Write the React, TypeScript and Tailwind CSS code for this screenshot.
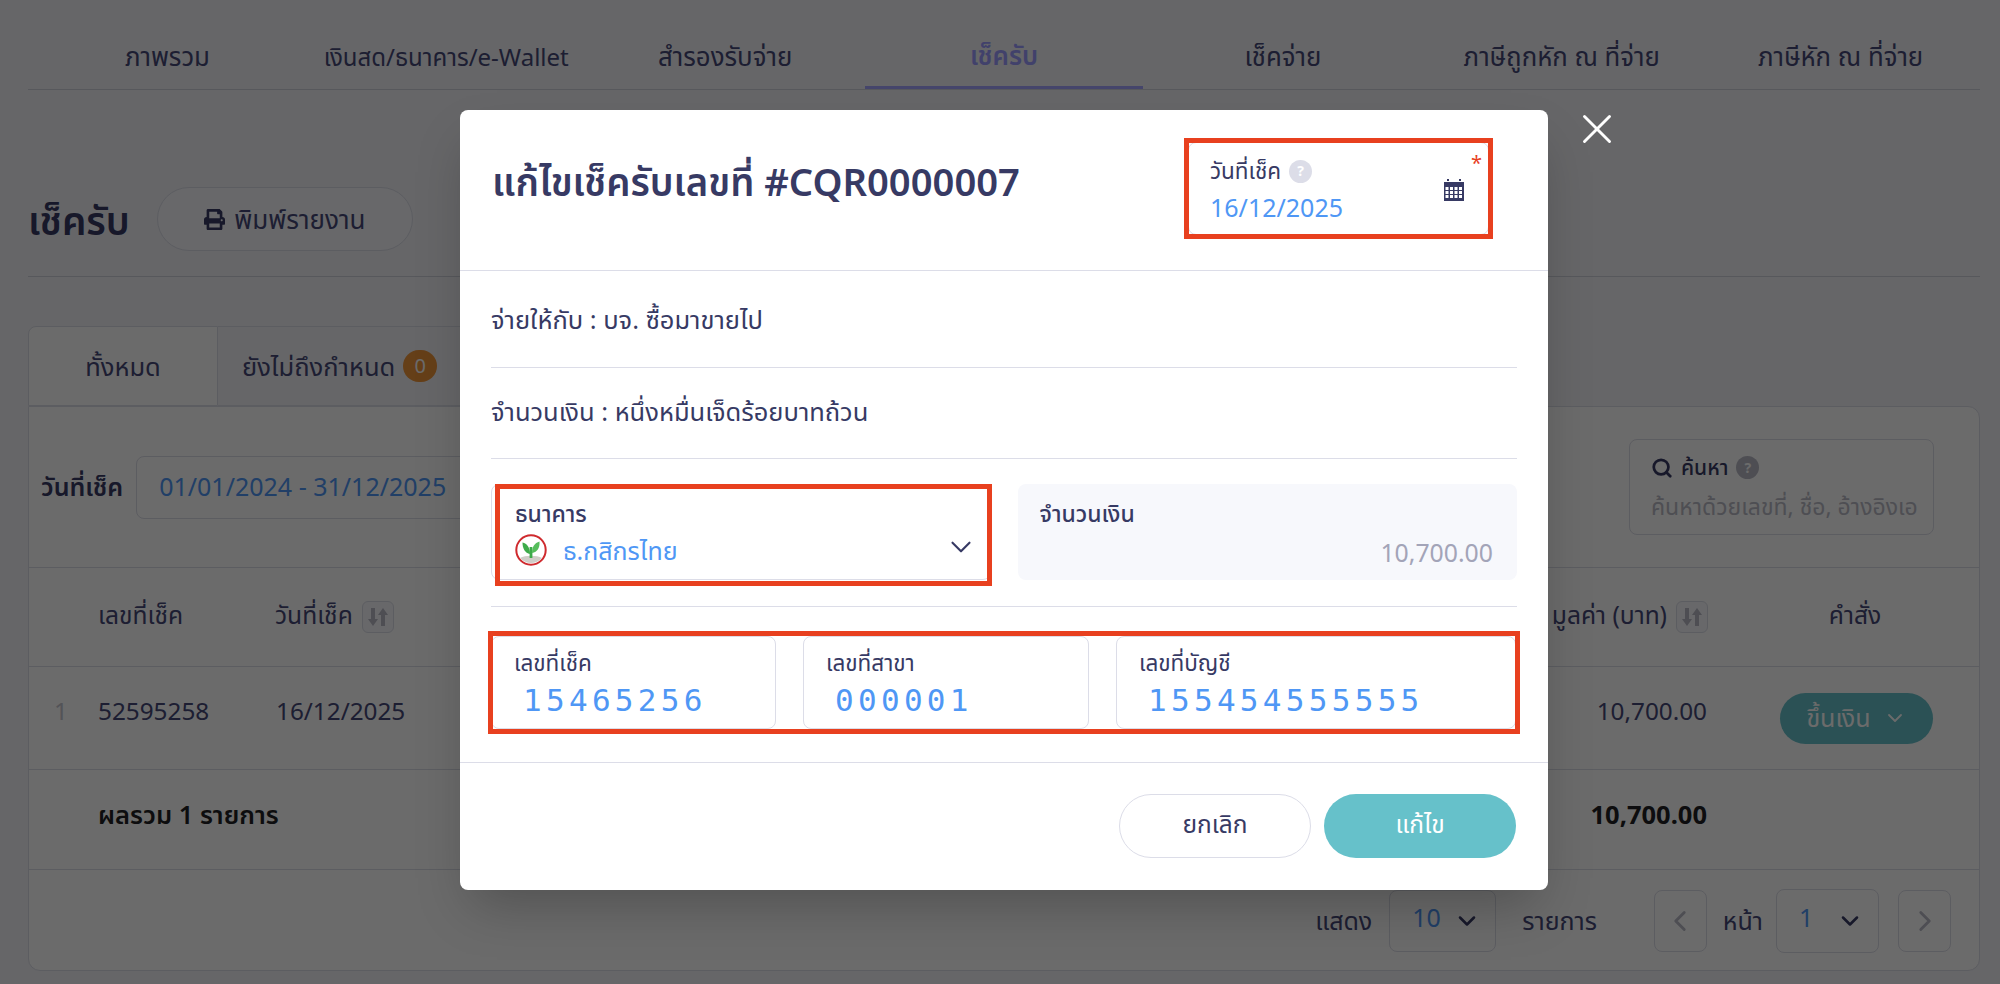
import { ChevronDown, ChevronLeft, ChevronRight, Search, X } from 'lucide-react'
import { FaPrint } from 'react-icons/fa'

const TABS = ['ภาพรวม', 'เงินสด/ธนาคาร/e-Wallet', 'สำรองรับจ่าย', 'เช็ครับ', 'เช็คจ่าย', 'ภาษีถูกหัก ณ ที่จ่าย', 'ภาษีหัก ณ ที่จ่าย']

function SortIcon() {
  return (
    <span className="flex h-[32px] w-[32px] items-center justify-center rounded-md border border-[#dcdde8] bg-[#f7f8fc]">
      <svg width="22" height="20" viewBox="0 0 22 20" fill="#b9bac6">
        <path d="M4 1h4v11h3l-5 7-5-7h3z" />
        <path d="M14 19h4V8h3l-5-7-5 7h3z" />
      </svg>
    </span>
  )
}

function HelpDot({ className }: { className: string }) {
  return (
    <span className={`flex h-[23px] w-[23px] items-center justify-center rounded-full text-[14px] font-bold text-white ${className}`}>?</span>
  )
}

function CalendarIcon() {
  return (
    <svg width="20" height="22" viewBox="0 0 20 22" fill="none">
      <rect x="0" y="3" width="20" height="19" fill="#373a64" />
      <rect x="3" y="0" width="2" height="2" fill="#373a64" />
      <rect x="15" y="0" width="2" height="2" fill="#373a64" />
      <g fill="#fff">
        {[8, 12, 16].map((y) =>
          [1.5, 6, 10.5, 15].map((x) => <rect key={`${x}-${y}`} x={x} y={y} width="3" height="3" />),
        )}
      </g>
    </svg>
  )
}

function KBankLogo() {
  return (
    <svg width="32" height="32" viewBox="0 0 32 32">
      <circle cx="16" cy="16" r="14.7" fill="#fff" stroke="#cf2a2e" strokeWidth="2" />
      <path d="M5 24c5-3 17-3 22 0-3 3.500-7 5-11 5s-8-1.500-11-5z" fill="#cfcdc8" />
      <path d="M14.600 13h2.800v11h-2.800z" fill="#3dab4a" />
      <path d="M15 20C10 19 7.500 14.500 7.500 8.500 12 9.500 15 13.500 15 20z" fill="#3dab4a" />
      <path d="M17 19c0-6 2.500-10 7.500-11.500.5 6-2 10.500-7.500 11.500z" fill="#56bd5c" />
    </svg>
  )
}

function CheckField({ label, value }: { label: string; value: string }) {
  return (
    <div className="h-[93px] rounded-lg border border-[#dcdde8] px-[22px] pt-[11px]">
      <div className="text-[22.500px] leading-[30px] text-[#373a64]">{label}</div>
      <div className="mt-[3px] pl-[9px] font-['DejaVu_Sans_Mono',monospace] text-[31px] leading-[38px] tracking-[4.300px] text-[#4f97f5]">{value}</div>
    </div>
  )
}

function PageBehind() {
  return (
    <div className="min-h-[984px] bg-[#f2f3f7] pl-[28px] pr-[20px] text-[#454878]">
      <div className="grid h-[90px] grid-cols-7 border-b border-[#d0d1dc]">
        {TABS.map((t) => (
          <div
            key={t}
            className={`flex items-center justify-center pt-[24px] ${t === 'เงินสด/ธนาคาร/e-Wallet' ? 'text-[24px]' : 'text-[25.800px]'} ${t === 'เช็ครับ' ? 'border-b-[3px] border-[#a4a4ff] font-semibold text-[#9c9cff]' : ''}`}
          >
            {t}
          </div>
        ))}
      </div>

      <div className="flex h-[187px] items-start border-b border-[#d0d1dc] pt-[97px]">
        <h1 className="mt-[10px] text-[38.500px] font-semibold leading-[46px] text-[#373a64]">เช็ครับ</h1>
        <button className="ml-[27px] flex h-[64px] w-[256px] items-center justify-center gap-[9px] rounded-full border border-[#dcdde8] bg-[#f7f8fc] text-[26px]">
          <FaPrint size={21} className="text-[#373a64]" />
          พิมพ์รายงาน
        </button>
      </div>

      <div className="mt-[49px] flex h-[80px]">
        <div className="flex w-[190px] items-center justify-center rounded-tl-lg border border-[#dcdde8] bg-white text-[25.500px]">ทั้งหมด</div>
        <div className="flex w-[300px] items-center gap-[8px] border-y border-r border-[#dcdde8] pl-[24px] text-[25.500px]">
          ยังไม่ถึงกำหนด
          <span className="flex h-[32px] w-[34px] items-center justify-center rounded-full bg-[#f0963a] text-[20px] text-white">0</span>
        </div>
      </div>

      <div className="h-[565px] rounded-b-xl rounded-tr-xl border border-[#dcdde8] bg-white">
        <div className="flex h-[160px] items-center justify-between pl-[12px] pr-[45px]">
          <div className="flex items-center">
            <span className="text-[25px] font-semibold text-[#373a64]">วันที่เช็ค</span>
            <div className="ml-[13px] flex h-[63px] w-[420px] items-center rounded-lg border border-[#dcdde8] pl-[22px] text-[25px] text-[#4f97f5]">
              01/01/2024 - 31/12/2025
            </div>
          </div>
          <div className="h-[96px] w-[305px] rounded-lg border border-[#dcdde8] pl-[21px] pt-[12px]">
            <div className="flex items-center gap-[8px] text-[21px] font-medium text-[#373a64]">
              <Search size={22} strokeWidth={3} />
              ค้นหา
              <HelpDot className="bg-[#b9bac6]" />
            </div>
            <div className="mt-[5px] whitespace-nowrap text-[23px] text-[#b9bac6]">ค้นหาด้วยเลขที่, ชื่อ, อ้างอิงเอ</div>
          </div>
        </div>

        <div className="flex h-[99px] items-center border-t border-[#dcdde8] pl-[69px] pr-[79px] text-[24.600px]">
          <span className="mb-[4px] w-[177px]">เลขที่เช็ค</span>
          <span className="mb-[4px]">วันที่เช็ค</span>
          <span className="ml-[9px]"><SortIcon /></span>
          <span className="mb-[4px] ml-auto">มูลค่า (บาท)</span>
          <span className="ml-[9px]"><SortIcon /></span>
          <span className="mb-[4px] ml-[102px] w-[90px] text-center">คำสั่ง</span>
        </div>

        <div className="flex h-[103px] items-center border-t border-[#dcdde8] pl-[25px] pr-[46px] text-[24.300px]">
          <span className="mb-[14px] w-[44px] text-[#c5c6d0]">1</span>
          <span className="mb-[14px] w-[178px]">52595258</span>
          <span className="mb-[14px]">16/12/2025</span>
          <span className="mb-[14px] ml-auto">10,700.00</span>
          <button className="ml-[73px] flex h-[51px] w-[153px] items-center justify-center gap-[12px] rounded-full bg-[#66c1ca] text-[25px] text-white">
            ขึ้นเงิน
            <ChevronDown size={24} strokeWidth={1.800} />
          </button>
        </div>

        <div className="flex h-[100px] items-center border-t border-[#dcdde8] pl-[69px] pr-[272px] text-[25.500px] font-semibold text-[#1f1f24]">
          <span className="mb-[10px]">ผลรวม 1 รายการ</span>
          <span className="mb-[10px] ml-auto font-bold">10,700.00</span>
        </div>

        <div className="flex h-[102px] items-center justify-end gap-[13px] border-t border-[#dcdde8] pr-[28px] text-[25px]">
          <span>แสดง</span>
          <div className="ml-[4px] flex h-[62px] w-[107px] items-center justify-between rounded-lg border border-[#dcdde8] pl-[22px] pr-[14px] text-[#4f97f5]">
            <span className="mb-[6px]">10</span>
            <ChevronDown size={28} className="text-[#373a64]" strokeWidth={2.200} />
          </div>
          <span className="ml-[13px] mr-[44px]">รายการ</span>
          <div className="flex h-[62px] w-[53px] items-center justify-center rounded-lg border border-[#dcdde8] text-[#b9bac6]"><ChevronLeft size={34} /></div>
          <span className="ml-[3px]">หน้า</span>
          <div className="flex h-[64px] w-[103px] items-center justify-between rounded-lg border border-[#dcdde8] pl-[22px] pr-[14px] text-[#4f97f5]">
            <span className="mb-[6px]">1</span>
            <ChevronDown size={28} className="text-[#373a64]" strokeWidth={2.200} />
          </div>
          <div className="ml-[6px] flex h-[62px] w-[53px] items-center justify-center rounded-lg border border-[#dcdde8] text-[#b9bac6]"><ChevronRight size={34} /></div>
        </div>
      </div>
    </div>
  )
}

export default function App() {
  return (
    <div className="relative h-[984px] overflow-hidden font-['Noto_Sans','Noto_Sans_Thai',sans-serif]">
      <PageBehind />

      {/* modal overlay */}
      <div className="absolute inset-0 bg-black/[0.58]" />
      <button className="absolute left-[1572px] top-[104px] text-white"><X size={50} strokeWidth={1.400} /></button>

      <div className="absolute left-[460px] top-[110px] w-[1088px] rounded-lg bg-white text-[#373a64] shadow-2xl">
        <div className="flex h-[161px] items-start justify-between border-b border-[#dcdde8] pl-[32px] pr-[59px]">
          <h2 className="mt-[46px] text-[38.200px] font-semibold leading-[50px]">แก้ไขเช็ครับเลขที่ #CQR0000007</h2>
          <div className="relative mt-[32px] h-[93px] w-[301px] rounded-lg border border-[#dcdde8] pl-[21px] pt-[14px]">
            <div className="flex items-center gap-[8px] text-[22.500px] leading-[28px]">
              วันที่เช็ค
              <HelpDot className="bg-[#dcdde8]" />
            </div>
            <div className="mt-[6px] text-[25px] leading-[32px] text-[#4f97f5]">16/12/2025</div>
            <span className="absolute right-[24px] top-[36px]"><CalendarIcon /></span>
            <span className="absolute right-[6px] top-[9px] text-[20px] leading-[22px] text-[#e8401f]">*</span>
            <div className="absolute -inset-[5px] border-[5px] border-[#e8401f]" />
          </div>
        </div>

        <div className="px-[31px]">
          <div className="flex h-[97px] items-center border-b border-[#dcdde8] text-[25.500px]">จ่ายให้กับ : บจ. ซื้อมาขายไป</div>
          <div className="flex h-[91px] items-center border-b border-[#dcdde8] pb-[4px] text-[25.500px]">จำนวนเงิน : หนึ่งหมื่นเจ็ดร้อยบาทถ้วน</div>

          <div className="grid h-[148px] grid-cols-2 gap-[27px] border-b border-[#dcdde8] pt-[25px]">
            <div className="relative h-[96px] rounded-lg border border-[#dcdde8] pl-[23px] pr-[12px] pt-[14px]">
              <div className="text-[23px] font-medium leading-[28px]">ธนาคาร</div>
              <div className="mt-[7px] flex items-center">
                <KBankLogo />
                <span className="ml-[16px] text-[25px] leading-[32px] text-[#4f97f5]">ธ.กสิกรไทย</span>
                <ChevronDown size={34} strokeWidth={1.500} className="ml-auto -mt-[6px]" />
              </div>
              <div className="absolute -bottom-[7px] -right-[2px] -top-[1px] left-[3px] border-[5px] border-[#e8401f]" />
            </div>
            <div className="h-[96px] rounded-lg bg-[#f7f8fc] pl-[22px] pr-[24px] pt-[15px]">
              <div className="text-[23px] font-medium leading-[28px]">จำนวนเงิน</div>
              <div className="mt-[9px] text-right text-[24.800px] leading-[32px] text-[#a3a4b8]">10,700.00</div>
            </div>
          </div>

          <div className="relative mb-[33px] mt-[29px] grid grid-cols-[285px_286px_400px] gap-[27px]">
            <CheckField label="เลขที่เช็ค" value="15465256" />
            <CheckField label="เลขที่สาขา" value="000001" />
            <CheckField label="เลขที่บัญชี" value="155454555555" />
            <div className="absolute -bottom-[5px] -left-[3px] -right-[3px] -top-[5px] border-[5px] border-[#e8401f]" />
          </div>
        </div>

        <div className="flex h-[128px] items-start justify-end gap-[13px] border-t border-[#dcdde8] pr-[32px] pt-[31px] text-[24.500px]">
          <button className="h-[64px] w-[192px] rounded-full border border-[#dcdde8] bg-white pb-[4px]">ยกเลิก</button>
          <button className="h-[64px] w-[192px] rounded-full bg-[#66c1ca] pb-[4px] text-white">แก้ไข</button>
        </div>
      </div>
    </div>
  )
}
